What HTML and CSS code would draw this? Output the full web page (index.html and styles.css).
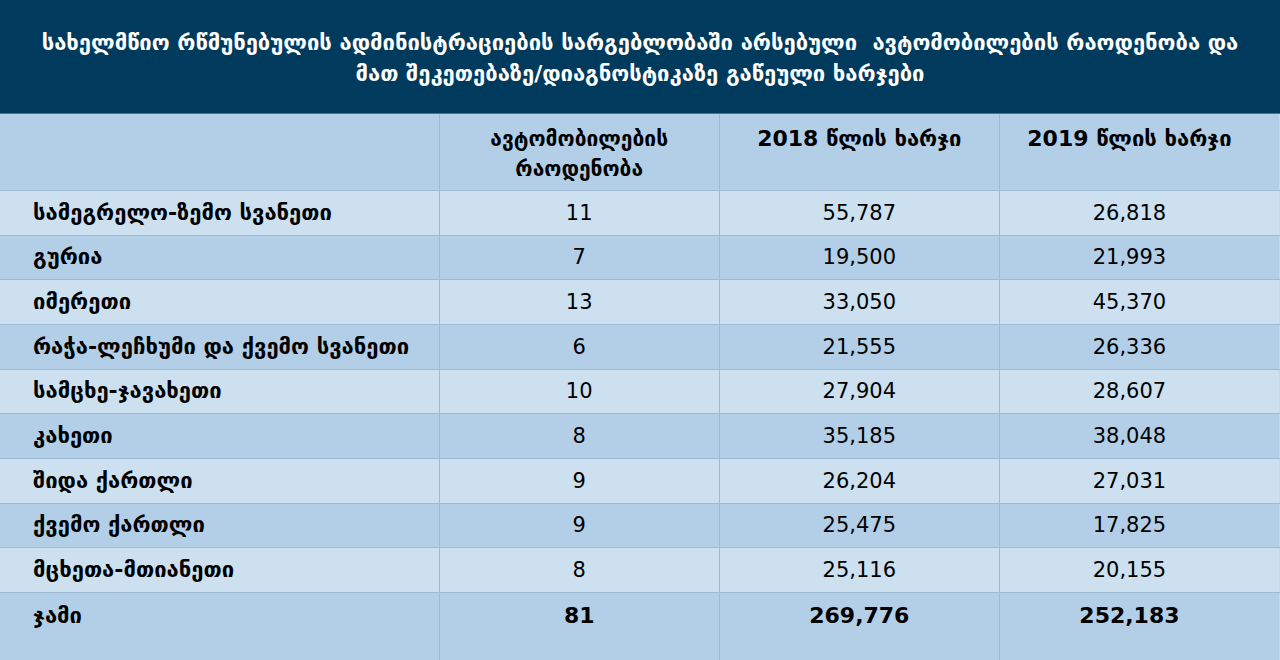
FILE: index.html
```html
<!DOCTYPE html>
<html lang="ka">
<head>
<meta charset="utf-8">
<title>ხარჯები</title>
<link rel="stylesheet" href="styles.css">
</head>
<body>
<div class="page">
  <header class="title">
    <h1>სახელმწიო რწმუნებულის ადმინისტრაციების სარგებლობაში არსებული&nbsp; ავტომობილების რაოდენობა და<br>მათ შეკეთებაზე/დიაგნოსტიკაზე გაწეული ხარჯები</h1>
  </header>
  <table class="data">
    <colgroup>
      <col class="c-name"><col class="c-num"><col class="c-num"><col class="c-num">
    </colgroup>
    <thead>
      <tr>
        <th></th>
        <th class="narrow">ავტომობილების<br>რაოდენობა</th>
        <th>2018 წლის ხარჯი</th>
        <th>2019 წლის ხარჯი</th>
      </tr>
    </thead>
    <tbody>
      <tr class="light"><td class="name">სამეგრელო-ზემო სვანეთი</td><td>11</td><td>55,787</td><td>26,818</td></tr>
      <tr class="dark"><td class="name">გურია</td><td>7</td><td>19,500</td><td>21,993</td></tr>
      <tr class="light"><td class="name">იმერეთი</td><td>13</td><td>33,050</td><td>45,370</td></tr>
      <tr class="dark"><td class="name">რაჭა-ლეჩხუმი და ქვემო სვანეთი</td><td>6</td><td>21,555</td><td>26,336</td></tr>
      <tr class="light"><td class="name">სამცხე-ჯავახეთი</td><td>10</td><td>27,904</td><td>28,607</td></tr>
      <tr class="dark"><td class="name">კახეთი</td><td>8</td><td>35,185</td><td>38,048</td></tr>
      <tr class="light"><td class="name">შიდა ქართლი</td><td>9</td><td>26,204</td><td>27,031</td></tr>
      <tr class="dark"><td class="name">ქვემო ქართლი</td><td>9</td><td>25,475</td><td>17,825</td></tr>
      <tr class="light"><td class="name">მცხეთა-მთიანეთი</td><td>8</td><td>25,116</td><td>20,155</td></tr>
      <tr class="dark total"><td class="name">ჯამი</td><td>81</td><td>269,776</td><td>252,183</td></tr>
    </tbody>
  </table>
</div>
</body>
</html>
```
FILE: styles.css
```css
html, body {
  margin: 0;
  padding: 0;
  background: #b2cfe7;
}
.page {
  width: 1280px;
  height: 660px;
  overflow: hidden;
  font-family: "DejaVu Sans", "Noto Sans", sans-serif;
  color: #000;
}
.title {
  background: #003a5d;
  height: 114px;
  display: flex;
  align-items: center;
  justify-content: center;
  border-bottom: 1px solid #4d7190;
  box-sizing: border-box;
}
.title h1 {
  margin: 0;
  color: #fff;
  font-size: 22px;
  font-weight: bold;
  line-height: 31px;
  text-align: center;
  padding-top: 2px;
}
.data {
  border-collapse: collapse;
  table-layout: fixed;
  width: 1280px;
}
.c-name { width: 439px; }
.c-num { width: 280px; }
.data th, .data td {
  border: 1px solid #9ebbd3;
  text-align: center;
  padding: 0;
}
.data tr:first-child th { border-top: none; }
.data th:first-child, .data td:first-child { border-left: none; }
.data th:last-child, .data td:last-child {
  padding-right: 20px;
  border-right-color: #c4d9ea;
}
.data th {
  height: 76.5px;
  vertical-align: top;
  padding-top: 10px;
  box-sizing: border-box;
  font-size: 22px;
  font-weight: bold;
  line-height: 30px;
  background: #b2cfe7;
}
.data th.narrow { font-size: 21px; }
.data td {
  height: 43.67px;
  font-size: 21px;
  line-height: 24px;
  vertical-align: middle;
}
.data td.name {
  text-align: left;
  padding-left: 33px;
  font-weight: bold;
  font-size: 22px;
}
.light td { background: #cce0ef; }
.dark td { background: #b2cfe7; }
.total td {
  height: 68px;
  vertical-align: top;
  padding-top: 11px;
  font-size: 22px;
  font-weight: bold;
  border-bottom: none;
}
```
